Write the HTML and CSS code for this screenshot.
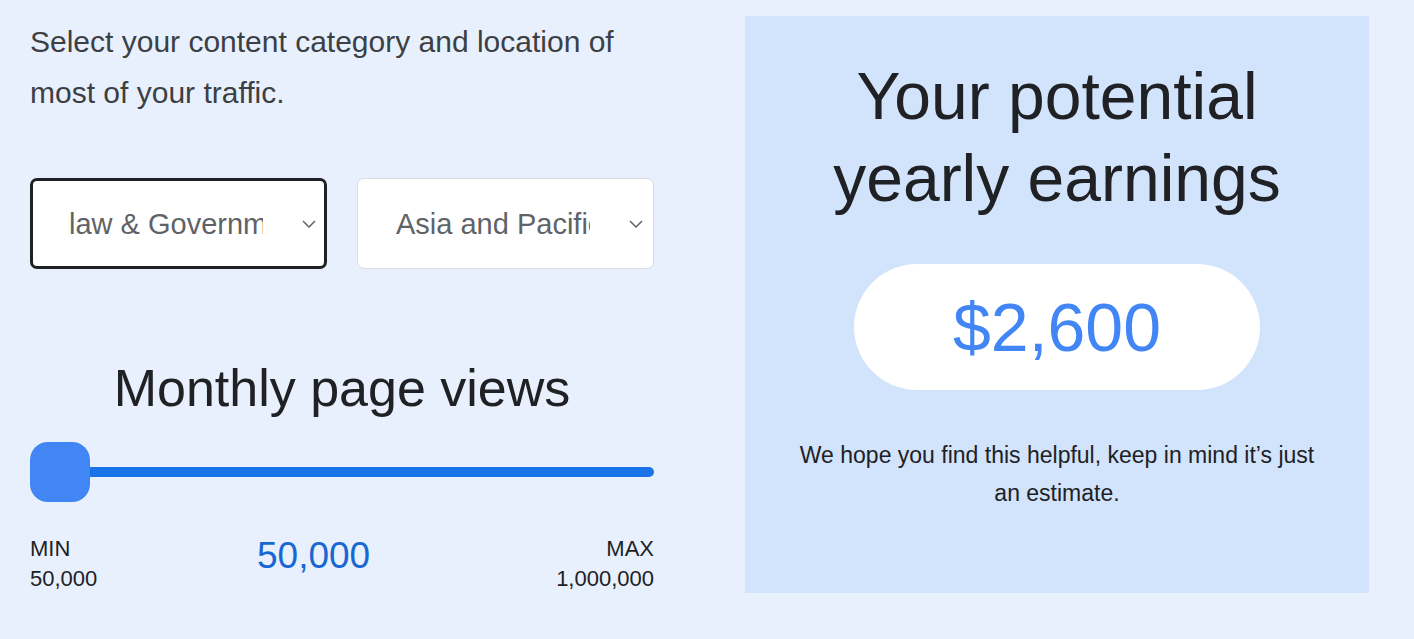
FILE: index.html
```html
<!DOCTYPE html>
<html lang="en">
<head>
    <meta charset="UTF-8">
    <meta name="viewport" content="width=device-width, initial-scale=1.0">
    <title>Earnings Calculator</title>
    <link rel="stylesheet" href="styles.css">
</head>
<body>
    <div class="calculator">
        <div class="calc-form">
            <p class="intro">Select your content category and location of most of your traffic.</p>

            <div class="select-row">
                <div class="select-wrap">
                    <select class="select is-active" id="category">
                        <option>law &amp; Government</option>
                        <option>Finance</option>
                        <option>Technology</option>
                    </select>
                    <svg class="chevron" width="14" height="8" viewBox="0 0 14 8"><polyline points="1,1 7,7 13,1" fill="none" stroke="#5f6368" stroke-width="1.5"/></svg>
                </div>
                <div class="select-wrap">
                    <select class="select" id="location">
                        <option>Asia and Pacific</option>
                        <option>Europe</option>
                        <option>North America</option>
                    </select>
                    <svg class="chevron" width="14" height="8" viewBox="0 0 14 8"><polyline points="1,1 7,7 13,1" fill="none" stroke="#5f6368" stroke-width="1.5"/></svg>
                </div>
            </div>

            <h2 class="views-title">Monthly page views</h2>

            <input type="range" class="range" id="pageViews" min="50000" max="1000000" step="10000" value="50000">

            <div class="range-labels">
                <div class="range-end">
                    <span>MIN</span>
                    <span>50,000</span>
                </div>
                <div class="range-value">50,000</div>
                <div class="range-end range-end-right">
                    <span>MAX</span>
                    <span>1,000,000</span>
                </div>
            </div>
        </div>

        <div class="result-panel">
            <h2 class="result-title">Your potential yearly earnings</h2>
            <div class="result-pill">
                <span>$2,600</span>
            </div>
            <p class="result-note">We hope you find this helpful, keep in mind it’s just an estimate.</p>
        </div>
    </div>
</body>
</html>
```

FILE: styles.css
```css
* {
    margin: 0;
    padding: 0;
    box-sizing: border-box;
}

body {
    background-color: #e8f0fe;
    font-family: 'Liberation Sans', Arial, sans-serif;
    color: #202124;
}

.calculator {
    display: flex;
    gap: 91px;
    padding: 16px 0 0 30px;
}

.calc-form {
    width: 624px;
    display: flex;
    flex-direction: column;
}

.intro {
    font-size: 30px;
    line-height: 51px;
    color: #3c4043;
}

.select-row {
    display: grid;
    grid-template-columns: 1fr 1fr;
    gap: 30px;
    margin-top: 60px;
}

.select-wrap {
    position: relative;
}

.select {
    appearance: none;
    -webkit-appearance: none;
    width: 100%;
    height: 91px;
    padding: 0 63px 0 38px;
    border: 1px solid #dadce0;
    border-radius: 7px;
    background-color: #ffffff;
    font-family: 'Liberation Sans', Arial, sans-serif;
    font-size: 29px;
    color: #5f6368;
    outline: none;
}

.select.is-active {
    border: 3px solid #202124;
    padding-left: 36px;
    padding-right: 61px;
}

.chevron {
    position: absolute;
    right: 11px;
    top: 50%;
    margin-top: -4px;
    pointer-events: none;
}

.views-title {
    margin-top: 89px;
    font-size: 52px;
    font-weight: normal;
    line-height: 60px;
    text-align: center;
    color: #202124;
}

.range {
    -webkit-appearance: none;
    appearance: none;
    display: block;
    width: 100%;
    height: 60px;
    margin-top: 24px;
    background: transparent;
}

.range::-webkit-slider-runnable-track {
    height: 10px;
    background: #1a73e8;
    border-radius: 5px;
}

.range::-webkit-slider-thumb {
    -webkit-appearance: none;
    width: 60px;
    height: 60px;
    margin-top: -25px;
    border: none;
    border-radius: 18px;
    background: #4285f4;
}

.range-labels {
    display: grid;
    grid-template-columns: 4fr auto 5fr;
    margin-top: 32px;
}

.range-end {
    display: flex;
    flex-direction: column;
    font-size: 22px;
    line-height: 30px;
    color: #202124;
}

.range-end-right {
    align-items: flex-end;
}

.range-value {
    font-size: 37px;
    line-height: 44px;
    color: #1967d2;
}

.result-panel {
    width: 624px;
    height: 577px;
    padding-top: 39px;
    background-color: #d2e3fc;
    display: flex;
    flex-direction: column;
    align-items: center;
    text-align: center;
}

.result-title {
    max-width: 470px;
    font-size: 66px;
    font-weight: normal;
    line-height: 82px;
    color: #202124;
}

.result-pill {
    width: 406px;
    height: 126px;
    margin-top: 45px;
    border-radius: 63px;
    background-color: #ffffff;
    display: flex;
    align-items: center;
    justify-content: center;
    font-size: 68px;
    color: #4285f4;
}

.result-note {
    max-width: 540px;
    margin-top: 46px;
    font-size: 23px;
    line-height: 38px;
    color: #202124;
}
```
